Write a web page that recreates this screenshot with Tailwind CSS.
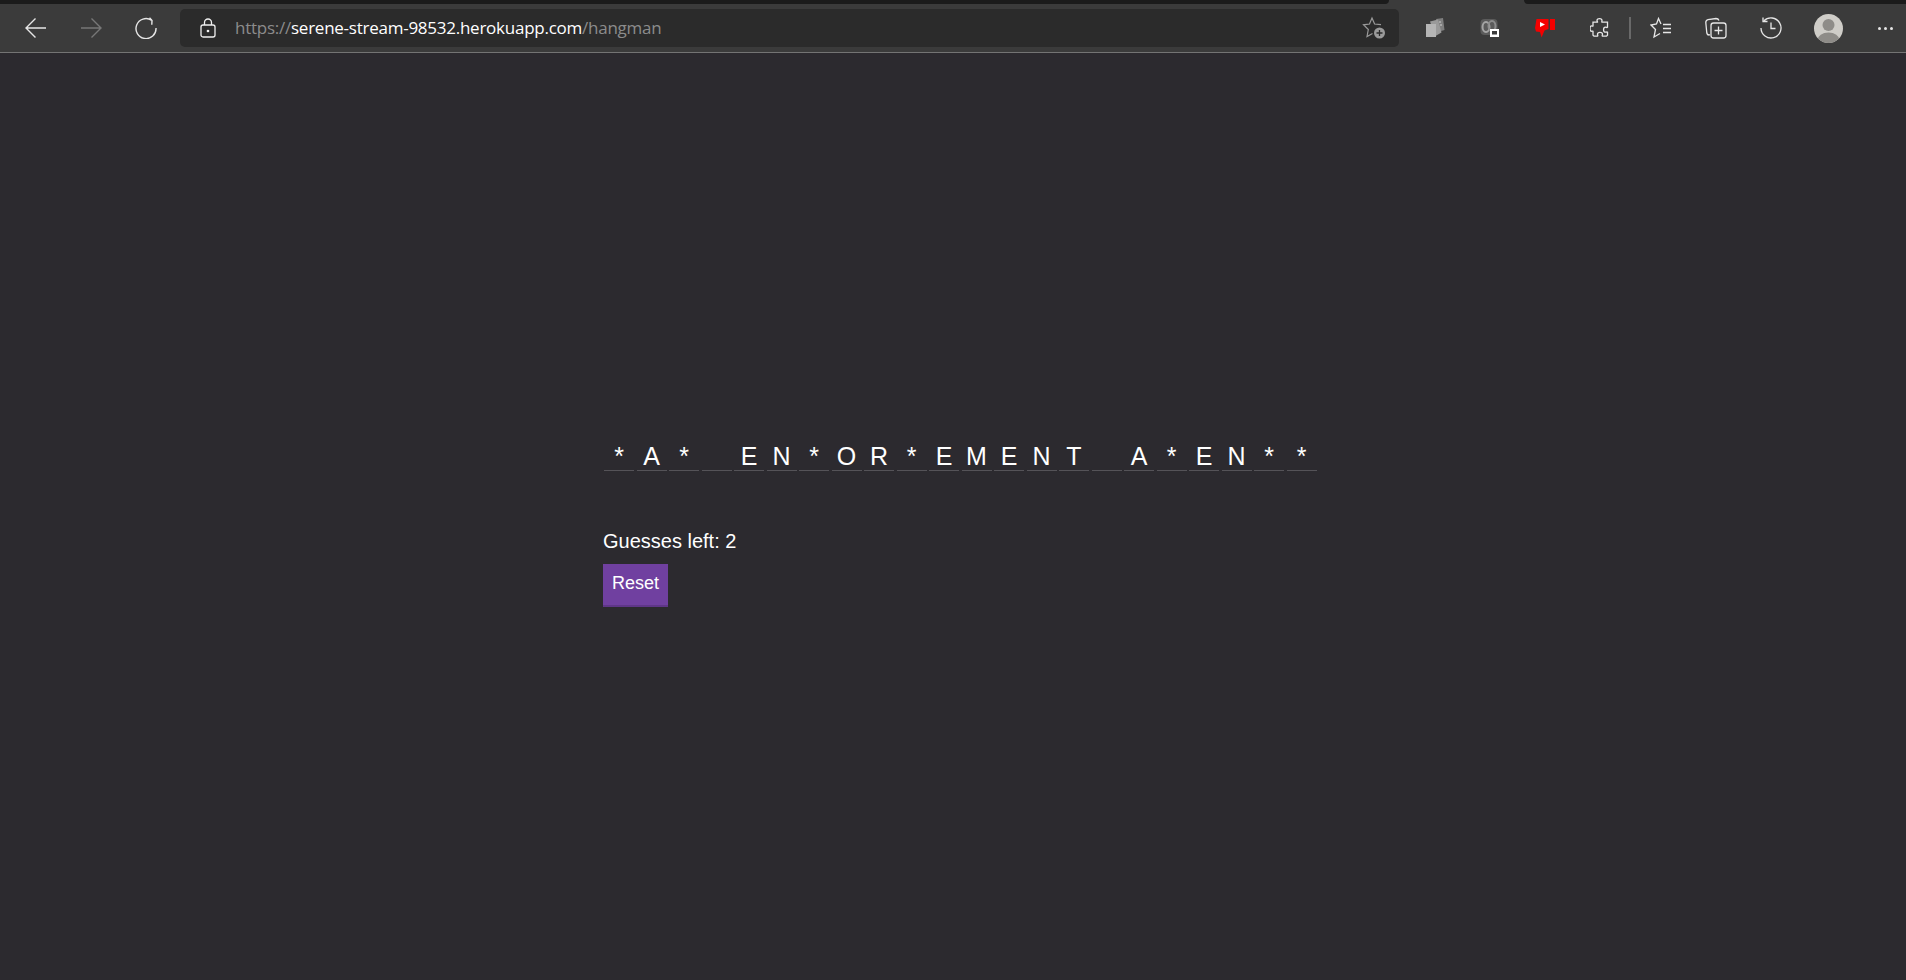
<!DOCTYPE html>
<html lang="en">

<head>
    <meta charset="UTF-8">
    <title>Hangman</title>
    <script src="https://cdn.jsdelivr.net/npm/@tailwindcss/browser@4"></script>
</head>

<body class="bg-[#2c2a2f] font-['Liberation_Sans',sans-serif] text-white h-[980px] overflow-hidden">
    <!-- Browser chrome -->
    <header class="bg-[#3b3b3b] border-b border-[#747474] h-[53px]">
        <div class="flex h-[4px]">
            <div class="w-[1389px] bg-[#1b1b1b] rounded-br-[5px]"></div>
            <div class="flex-1 bg-[#1b1b1b] ml-[135px] rounded-bl-[5px]"></div>
        </div>
        <div class="flex items-center h-[48px] pl-[8px]">
            <div class="w-[55px] flex justify-center">
                <svg class="w-[22px] h-[22px]" viewBox="0 0 22 22" fill="none" stroke="#e6e6e6" stroke-width="1.4"><path d="M1 11h20M10.500 1.500 1 11l9.500 9.500" /></svg>
            </div>
            <div class="w-[55px] flex justify-center">
                <svg class="w-[22px] h-[22px]" viewBox="0 0 22 22" fill="none" stroke="#777777" stroke-width="1.4"><path d="M1 11h20M11.500 1.500 21 11l-9.500 9.500" /></svg>
            </div>
            <div class="w-[55px] flex justify-center">
                <svg class="w-[22px] h-[22px]" viewBox="0 0 22 22" fill="none" stroke="#e6e6e6" stroke-width="1.4"><path d="M16.500 3.200A10 10 0 1 0 21 11" /><path d="M14.500 0.800 17 3.500l-.2 4.300" /></svg>
            </div>
            <div class="ml-[7px] w-[1219px] h-[38px] bg-[#2b2b2b] rounded-[5px] flex items-center">
                <div class="w-[55px] flex justify-center">
                    <svg class="w-[16px] h-[20px]" viewBox="0 0 16 20" fill="none" stroke="#f0f0f0" stroke-width="1.3"><rect x="1" y="7" width="14" height="12" rx="2" /><path d="M4.500 7V4.500a3.500 3.500 0 0 1 7 0V7" /><circle cx="8" cy="13" r="0.700" fill="#f0f0f0" /></svg>
                </div>
                <div class="text-[17px] tracking-[-0.25px] font-['Open_Sans',sans-serif] text-[#8c8c8c]">https://<span class="text-white">serene-stream-98532.herokuapp.com</span>/hangman</div>
                <div class="ml-auto mr-[13px]">
                    <svg class="w-[24px] h-[24px]" viewBox="0 0 24 24" fill="none"><path d="M19 8.600 12.600 8 10 2 7.500 8 1.500 8.800l4.800 4.700L5 20.500l5.500-3" stroke="#9a9a9a" stroke-width="1.200" /><circle cx="17.500" cy="17" r="5.500" fill="#9a9a9a" /><path d="M17.500 14v6M14.500 17h6" stroke="#2b2b2b" stroke-width="1.300" /></svg>
                </div>
            </div>
            <div class="ml-[8px] w-[55px] flex justify-center">
                <svg class="w-[20px] h-[20px]" viewBox="0 0 20 20"><path d="M11 1l7-1 1.500 12-5 1.500z" fill="#7f7f7f" /><path d="M5 3.500l8-2 3.500 13-6 3.500z" fill="#9a9a9a" /><rect x="1" y="6" width="10" height="13" fill="#b5b5b5" /><path d="M14 4h2M15 7h2" stroke="#d0d0d0" stroke-width="1" /></svg>
            </div>
            <div class="w-[55px] flex justify-center">
                <svg class="w-[20px] h-[20px]" viewBox="0 0 20 20"><rect x="0.500" y="1" width="17" height="16" rx="4" fill="#5b5b5b" /><ellipse cx="6" cy="9" rx="3.500" ry="5" fill="none" stroke="#a5a5a5" stroke-width="2" /><ellipse cx="12" cy="8" rx="3.500" ry="5" fill="none" stroke="#8d8d8d" stroke-width="2" /><rect x="10" y="11" width="9" height="8" fill="#ffffff" /><rect x="12" y="13" width="5" height="3.500" fill="#3b3b3b" /></svg>
            </div>
            <div class="w-[55px] flex justify-center">
                <svg class="w-[22px] h-[20px]" viewBox="0 0 22 20"><path d="M2.500 1h12v10l-4 1.500-3 7-1.500-5.500-4-.5L1 10z" fill="#f40000" /><rect x="16" y="1" width="5" height="11" fill="#f40000" /><path d="M6 4l5 2.500L6 9z" fill="#ffffff" /></svg>
            </div>
            <div class="w-[55px] flex justify-center">
                <svg class="w-[20px] h-[22px]" viewBox="0 0 20 22" fill="none" stroke="#e6e6e6" stroke-width="1.300"><path d="M7 3.500C7 1 12 1 12 3.500c0 1-.5 1.200 0 1.700h5.500v5c-.5.700-1 0-2 0-2.600 0-2.600 5 0 5 1 0 1.500-.7 2 0v3l-1 1h-4c-.7-.5 0-1 0-2 0-2.500-5-2.500-5 0 0 1 .7 1.500 0 2H4l-1-1v-4c-.5-.5-1 .2-2 0C-.3 13.500-.3 9.500 1 9c1-.2 1.500.5 2 0V5.200h4.500c.3-.5-.5-.7-.5-1.700z" /></svg>
            </div>
            <div class="w-[6px] flex justify-center"><div class="w-[2px] h-[22px] bg-[#696969]"></div></div>
            <div class="w-[55px] flex justify-center">
                <svg class="w-[22px] h-[22px]" viewBox="0 0 22 22" fill="none" stroke="#e6e6e6" stroke-width="1.300"><path d="M11 7 8.500 1.500 6.500 7 1 8l4.500 4.500L4 20l6-3.500" /><path d="M13 7.500h8M13 11.500h8M13 15.500h8" /></svg>
            </div>
            <div class="w-[55px] flex justify-center">
                <svg class="w-[22px] h-[22px]" viewBox="0 0 22 22" fill="none" stroke="#e6e6e6" stroke-width="1.300"><path d="M5 17.500l-1 .5C3 18 2 17 1.800 16L.8 5.500C.8 4 1.500 3 3 2.700l8-1.200c1.500 0 2.500.7 3 2" /><rect x="6" y="6" width="15" height="15" rx="2.500" /><path d="M13.500 9.500v8M9.500 13.500h8" /></svg>
            </div>
            <div class="w-[55px] flex justify-center">
                <svg class="w-[22px] h-[22px]" viewBox="0 0 22 22" fill="none" stroke="#e6e6e6" stroke-width="1.300"><path d="M3.800 4A10 10 0 1 1 1 11" /><path d="M3 .5V4.500h4.500M11 5.500v6h4.500" /></svg>
            </div>
            <div class="w-[60px] flex justify-center">
                <svg class="w-[29px] h-[29px]" viewBox="0 0 29 29"><defs><clipPath id="avatarClip"><circle cx="14.500" cy="14.500" r="14.500" /></clipPath></defs><circle cx="14.500" cy="14.500" r="14.500" fill="#cfcdc8" /><circle cx="14.500" cy="11" r="6" fill="#8e8c88" /><ellipse cx="14.500" cy="26" rx="11" ry="7.500" fill="#8e8c88" clip-path="url(#avatarClip)" /></svg>
            </div>
            <div class="w-[48px] flex justify-center pl-[6px] gap-[3px]">
                <span class="w-[3px] h-[3px] rounded-full bg-[#e6e6e6]"></span>
                <span class="w-[3px] h-[3px] rounded-full bg-[#e6e6e6]"></span>
                <span class="w-[3px] h-[3px] rounded-full bg-[#e6e6e6]"></span>
            </div>
        </div>
    </header>

    <!-- Game -->
    <main class="w-[700px] mx-auto pt-[389px]">
        <div class="ml-[1px] flex gap-[2.5px] text-[25px] leading-[28px] w-max">
            <span class="w-[30px] text-center border-b border-[#555358]">*</span>
            <span class="w-[30px] text-center border-b border-[#555358]">A</span>
            <span class="w-[30px] text-center border-b border-[#555358]">*</span>
            <span class="w-[30px] text-center border-b border-[#555358]">&nbsp;</span>
            <span class="w-[30px] text-center border-b border-[#555358]">E</span>
            <span class="w-[30px] text-center border-b border-[#555358]">N</span>
            <span class="w-[30px] text-center border-b border-[#555358]">*</span>
            <span class="w-[30px] text-center border-b border-[#555358]">O</span>
            <span class="w-[30px] text-center border-b border-[#555358]">R</span>
            <span class="w-[30px] text-center border-b border-[#555358]">*</span>
            <span class="w-[30px] text-center border-b border-[#555358]">E</span>
            <span class="w-[30px] text-center border-b border-[#555358]">M</span>
            <span class="w-[30px] text-center border-b border-[#555358]">E</span>
            <span class="w-[30px] text-center border-b border-[#555358]">N</span>
            <span class="w-[30px] text-center border-b border-[#555358]">T</span>
            <span class="w-[30px] text-center border-b border-[#555358]">&nbsp;</span>
            <span class="w-[30px] text-center border-b border-[#555358]">A</span>
            <span class="w-[30px] text-center border-b border-[#555358]">*</span>
            <span class="w-[30px] text-center border-b border-[#555358]">E</span>
            <span class="w-[30px] text-center border-b border-[#555358]">N</span>
            <span class="w-[30px] text-center border-b border-[#555358]">*</span>
            <span class="w-[30px] text-center border-b border-[#555358]">*</span>
        </div>
        <p class="mt-[58px] text-[20px] leading-[24px]">Guesses left: 2</p>
        <button class="mt-[11px] block w-[65px] h-[43px] bg-[#7040a0] border-b-2 border-[#5f3688] text-[18px] pb-[3px] text-white">Reset</button>
    </main>
</body>

</html>
